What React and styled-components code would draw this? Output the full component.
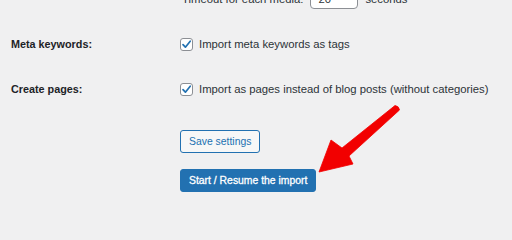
import React from "react";
import styled, { createGlobalStyle } from "styled-components";

const Global = createGlobalStyle`
  html, body { margin: 0; padding: 0; background: #f0f0f1; overflow: hidden; }
  body { font-family: "Liberation Sans", Arial, sans-serif; color: #1d2327; }
`;

const Page = styled.div`
  position: relative;
  width: 512px;
  height: 201px;
  overflow: hidden;
  padding-left: 11px;
  box-sizing: border-box;
`;

const TopRow = styled.div`
  display: flex;
  align-items: baseline;
  gap: 7px;
  margin-top: -12px;
  padding-left: 171px;
  font-size: 11.3px;
  color: #2c3338;
  height: 22px;
`;

const NumberInput = styled.div`
  box-sizing: border-box;
  width: 48px;
  height: 21px;
  padding: 3px 7px;
  line-height: 14px;
  background: #fff;
  border: 1px solid #8c8f94;
  border-radius: 4px;
  font-size: 11.3px;
  color: #2c3338;
`;

const Rows = styled.div`
  margin-top: 11.5px;
`;

const FormRow = styled.div`
  display: grid;
  grid-template-columns: 169px 1fr;
  align-items: center;
  height: 45px;
`;

const Label = styled.div`
  font-size: 10.8px;
  font-weight: 700;
  color: #1d2327;
`;

const CheckLabel = styled.label`
  display: flex;
  align-items: center;
  gap: 6px;
  font-size: 11.3px;
  color: #2c3338;
`;

const Box = styled.span`
  box-sizing: border-box;
  width: 13px;
  height: 13px;
  border: 1px solid #8c8f94;
  border-radius: 3px;
  background: #fff;
  display: flex;
  align-items: center;
  justify-content: center;
`;

const Actions = styled.div`
  display: flex;
  flex-direction: column;
  align-items: flex-start;
  gap: 16px;
  padding-left: 169px;
  margin-top: 18.5px;
`;

const Button = styled.button`
  box-sizing: border-box;
  height: 23px;
  padding: 0 8px;
  border-radius: 3px;
  font-family: "Liberation Sans", Arial, sans-serif;
  font-size: 10.4px;
  line-height: 21px;
  border: 1px solid #2271b1;
  background: ${(p) => (p.$primary ? "#2271b1" : "#f6f7f7")};
  color: ${(p) => (p.$primary ? "#ffffff" : "#2271b1")};
  font-weight: 400;
  -webkit-text-stroke: ${(p) => (p.$primary ? "0.3px #ffffff" : "0")};
  cursor: pointer;
`;

const ArrowSvg = styled.svg`
  position: absolute;
  left: 0;
  top: 0;
  pointer-events: none;
`;

function Checkbox() {
  return (
    <Box>
      <svg width="11" height="11" viewBox="0 0 11 11">
        <path
          d="M2 5.6 L4.4 8.2 L9.2 2.2"
          fill="none"
          stroke="#2271b1"
          strokeWidth="1.7"
          strokeLinecap="round"
          strokeLinejoin="round"
        />
      </svg>
    </Box>
  );
}

export default function App() {
  return (
    <>
      <Global />
      <Page>
        <TopRow>
          <span>Timeout for each media:</span>
          <NumberInput>20</NumberInput>
          <span>seconds</span>
        </TopRow>
        <Rows>
          <FormRow>
            <Label>Meta keywords:</Label>
            <CheckLabel>
              <Checkbox />
              Import meta keywords as tags
            </CheckLabel>
          </FormRow>
          <FormRow>
            <Label>Create pages:</Label>
            <CheckLabel>
              <Checkbox />
              Import as pages instead of blog posts (without categories)
            </CheckLabel>
          </FormRow>
        </Rows>
        <Actions>
          <Button>Save settings</Button>
          <Button $primary>Start / Resume the import</Button>
        </Actions>
        <ArrowSvg width="512" height="201" viewBox="0 0 512 201">
          <path
            d="M395 105.5 Q399 106 399.5 110 L349 156 L353 164 L319 172 L331 140 L342 148 Z"
            fill="#f20000"
            stroke="#f20000"
            strokeWidth="0.8"
            strokeLinejoin="round"
          />
        </ArrowSvg>
      </Page>
    </>
  );
}
